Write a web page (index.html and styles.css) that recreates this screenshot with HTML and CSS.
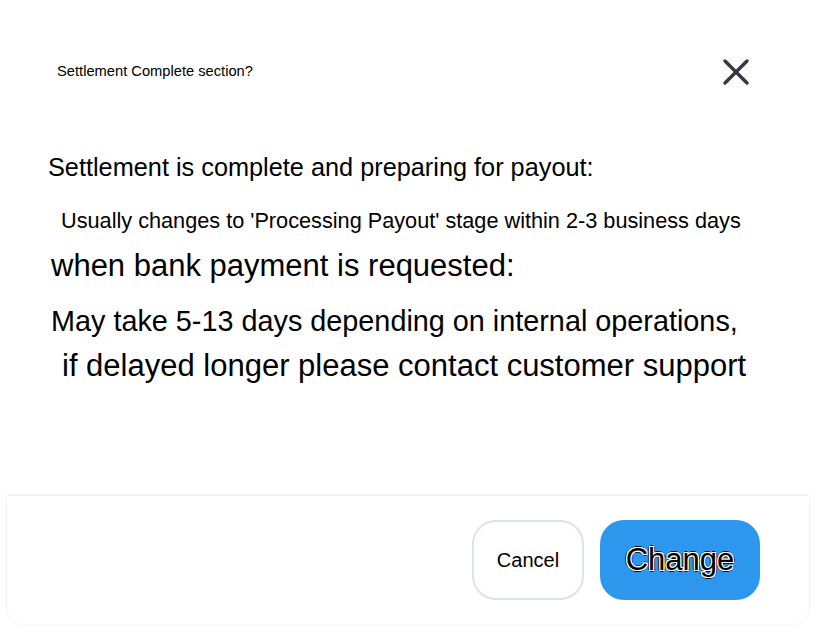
FILE: index.html
```html
<!DOCTYPE html>
<html lang="en">
<head>
    <meta charset="UTF-8">
    <meta name="viewport" content="width=device-width, initial-scale=1.0">
    <title>Settlement Complete section?</title>
    <link rel="stylesheet" href="styles.css">
</head>
<body>
    <div class="dialog">
        <div class="header">
            <p class="title">Settlement Complete section?</p>
            <button class="close" aria-label="Close">
                <svg width="28" height="28" viewBox="0 0 28 28">
                    <path d="M3 3 L25 25 M25 3 L3 25" stroke="#343a40" stroke-width="3.5" stroke-linecap="round" fill="none"/>
                </svg>
            </button>
        </div>
        <div class="content">
            <p class="lead">Settlement is complete and preparing for payout:</p>
            <p class="sub">Usually changes to 'Processing Payout' stage within 2-3 business days</p>
            <p class="big when">when bank payment is requested:</p>
            <p class="big may">May take 5-13 days depending on internal operations,</p>
            <p class="big delayed">if delayed longer please contact customer support</p>
        </div>
        <div class="footer">
            <button class="btn cancel">Cancel</button>
            <button class="btn change">Change</button>
        </div>
    </div>
</body>
</html>
```

FILE: styles.css
```css
body {
    margin: 0;
    background: #fff;
    font-family: "Liberation Sans", Arial, sans-serif;
    color: #000;
}
p {
    margin: 0;
}
.dialog {
    width: 816px;
    height: 628px;
    display: flex;
    flex-direction: column;
}
.header {
    display: flex;
    justify-content: space-between;
    align-items: center;
    padding: 58px 66px 0 57px;
}
.title {
    font-size: 14.7px;
    margin-top: -3px;
}
.close {
    border: none;
    background: none;
    padding: 0;
    width: 28px;
    height: 28px;
    cursor: pointer;
}
.content {
    padding: 0 0 0 48px;
    flex: 1;
}
.lead {
    font-size: 25.3px;
    margin-top: 67px;
}
.sub {
    font-size: 21.7px;
    margin-top: 26px;
    padding-left: 13px;
}
.big {
    font-size: 31px;
}
.when {
    margin-top: 14px;
    padding-left: 3px;
}
.may {
    font-size: 28.8px;
    margin-top: 21px;
    padding-left: 3px;
}
.delayed {
    margin-top: 10px;
    padding-left: 14px;
}
.footer {
    margin: 0 7px 4px;
    height: 128px;
    box-sizing: border-box;
    display: flex;
    justify-content: flex-end;
    align-items: flex-start;
    gap: 16px;
    padding: 24px 49px 0 0;
    border-radius: 0 0 18px 18px;
    box-shadow: 0 -1px 3px rgba(0, 0, 0, 0.08), 0 1px 4px rgba(0, 0, 0, 0.04);
}
.btn {
    height: 80px;
    border-radius: 24px;
    font-family: "Liberation Sans", Arial, sans-serif;
    cursor: pointer;
}
.cancel {
    width: 112px;
    background: #fff;
    border: 2px solid #dfe2e7;
    font-size: 20px;
    color: #000;
}
.change {
    width: 160px;
    background: #2d96ed;
    border: none;
    font-size: 31px;
    color: #000;
    text-shadow: 1px 0 #fff, -1px 0 #fff, 0 1px #fff, 0 -1px #fff,
        1px 1px #fff, -1px -1px #fff, 1px -1px #fff, -1px 1px #fff,
        2px 0 #000, -2px 0 #000, 0 2px #000, 0 -2px #000;
}
```
